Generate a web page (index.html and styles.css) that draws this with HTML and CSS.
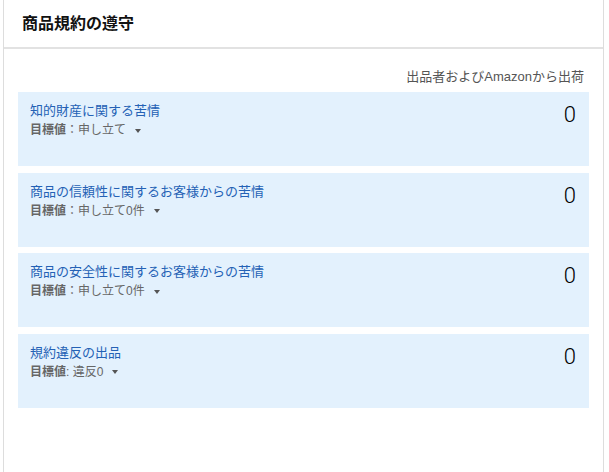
FILE: index.html
```html
<!DOCTYPE html>
<html lang="ja">
<head>
<meta charset="utf-8">
<link rel="stylesheet" href="styles.css">
</head>
<body>
<div class="card">
  <div class="header"><h2 class="title">商品規約の遵守</h2></div>
  <div class="content">
    <div class="note">出品者およびAmazonから出荷</div>
    <div class="list">
      <div class="item">
        <div class="info">
          <a class="name">知的財産に関する苦情</a>
          <div class="target"><span class="label">目標値</span>：申し立て<span class="caret"></span></div>
        </div>
        <div class="count">0</div>
      </div>
      <div class="item">
        <div class="info">
          <a class="name">商品の信頼性に関するお客様からの苦情</a>
          <div class="target"><span class="label">目標値</span>：申し立て0件<span class="caret"></span></div>
        </div>
        <div class="count">0</div>
      </div>
      <div class="item">
        <div class="info">
          <a class="name">商品の安全性に関するお客様からの苦情</a>
          <div class="target"><span class="label">目標値</span>：申し立て0件<span class="caret"></span></div>
        </div>
        <div class="count">0</div>
      </div>
      <div class="item">
        <div class="info">
          <a class="name">規約違反の出品</a>
          <div class="target"><span class="label">目標値</span>: 違反0<span class="caret"></span></div>
        </div>
        <div class="count">0</div>
      </div>
    </div>
  </div>
</div>
</body>
</html>
```
FILE: styles.css
```css
html, body {
  margin: 0;
  padding: 0;
  background: #ffffff;
  font-family: "Liberation Sans", "Noto Sans CJK JP", sans-serif;
}
.card {
  margin-left: 3px;
  width: 599px;
  height: 472px;
  border-left: 1px solid #dddddd;
  border-right: 1px solid #dddddd;
  box-sizing: content-box;
}
.header {
  border-bottom: 2px solid #e2e2e2;
  display: flex;
  align-items: center;
  padding-left: 18px;
  box-sizing: border-box;
  height: 49px;
}
.title {
  margin: 0 0 4px 0;
  font-size: 16px;
  font-weight: bold;
  color: #111111;
}
.content {
  padding: 0 14px;
}
.note {
  text-align: right;
  font-size: 13px;
  color: #555555;
  padding: 17px 5px 0 0;
  height: 26px;
}
.list {
  display: flex;
  flex-direction: column;
  gap: 6.5px;
}
.item {
  background: #e3f1fd;
  height: 74px;
  display: flex;
  justify-content: space-between;
  align-items: flex-start;
  padding: 10px 13px 0 12px;
  box-sizing: border-box;
}
.info {
  display: flex;
  flex-direction: column;
  gap: 3px;
}
.name {
  font-size: 13px;
  color: #2461b5;
  line-height: 17px;
}
.target {
  font-size: 12px;
  color: #666666;
  line-height: 17px;
  display: flex;
  align-items: center;
}
.label {
  font-weight: bold;
}
.caret {
  display: inline-block;
  width: 0;
  height: 0;
  border-left: 3.5px solid transparent;
  border-right: 3.5px solid transparent;
  border-top: 4px solid #555555;
  margin-left: 9px;
}
.count {
  font-family: Roboto, "Liberation Sans", sans-serif;
  font-weight: 300;
  font-size: 22px;
  color: #000000;
  line-height: 24px;
  margin-top: 1px;
}
```
